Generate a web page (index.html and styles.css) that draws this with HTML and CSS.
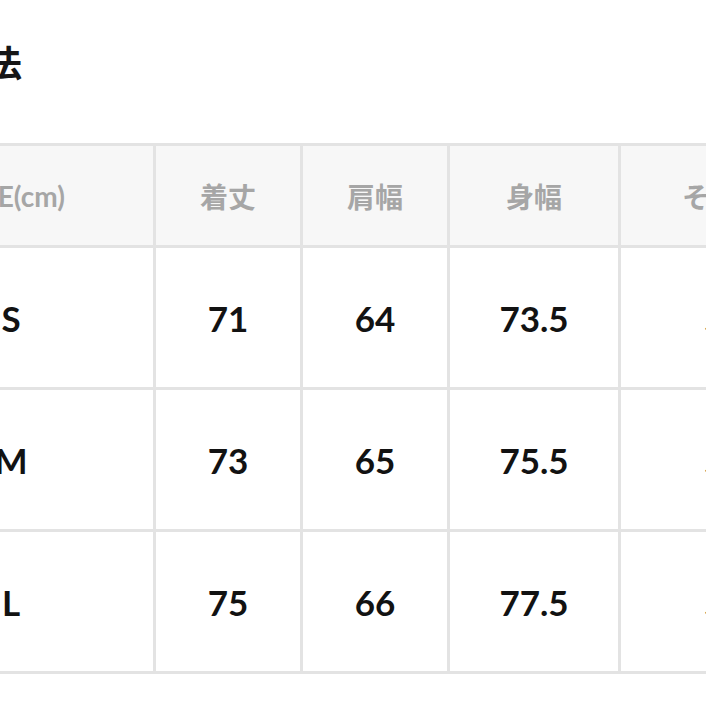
FILE: index.html
```html
<!DOCTYPE html>
<html lang="ja">
<head>
<meta charset="utf-8">
<title>寸法</title>
<link rel="stylesheet" href="styles.css">
</head>
<body>
<div class="page">
  <h2 class="title">寸法</h2>
  <table class="size-table">
    <colgroup>
      <col class="c1"><col class="c2"><col class="c3"><col class="c4"><col class="c5">
    </colgroup>
    <thead>
      <tr>
        <th>SIZE(cm)</th>
        <th>着丈</th>
        <th>肩幅</th>
        <th>身幅</th>
        <th>そで丈</th>
      </tr>
    </thead>
    <tbody>
      <tr><td>S</td><td>71</td><td>64</td><td>73.5</td><td>55</td></tr>
      <tr><td>M</td><td>73</td><td>65</td><td>75.5</td><td>56</td></tr>
      <tr><td>L</td><td>75</td><td>66</td><td>77.5</td><td>57</td></tr>
    </tbody>
  </table>
</div>
</body>
</html>
```

FILE: styles.css
```css
html, body {
  margin: 0;
  padding: 0;
  background: #ffffff;
}

.page {
  width: 706px;
  height: 706px;
  overflow: hidden;
  font-family: Lato, "Noto Sans CJK JP", sans-serif;
}

.title {
  margin: 43px 0 0 -50px;
  font-family: "Noto Sans CJK JP", sans-serif;
  font-size: 36px;
  line-height: 36px;
  font-weight: 700;
  color: #161616;
  white-space: nowrap;
}

.size-table {
  margin: 64px 0 0 -134px;
  border-collapse: separate;
  border-spacing: 3px;
  background: #e3e3e3;
  table-layout: fixed;
  width: 964px;
}

.c1 { width: 284px; }
.c2 { width: 144px; }
.c3 { width: 144px; }
.c4 { width: 168px; }
.c5 { width: 206px; }

.size-table th,
.size-table td {
  padding: 0;
  text-align: center;
  vertical-align: middle;
  white-space: nowrap;
}

.size-table th {
  height: 99px;
  background: #f7f7f7;
  color: #a6a6a6;
  font-family: Lato, "Noto Sans CJK JP", sans-serif;
  font-size: 28px;
  font-weight: 700;
}

.size-table td {
  height: 139px;
  background: #ffffff;
  color: #121212;
  font-size: 35px;
  font-weight: 700;
}
```
